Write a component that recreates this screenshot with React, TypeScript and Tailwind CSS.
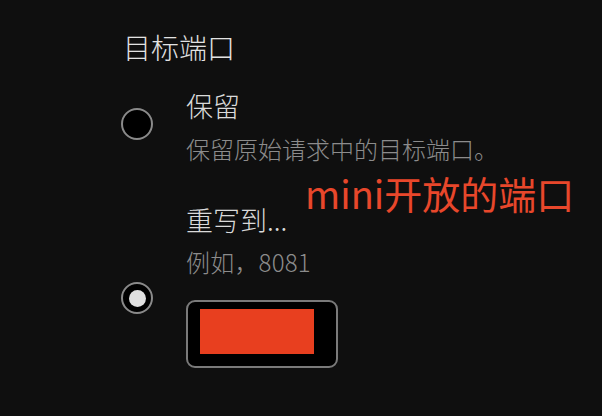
import React from 'react';

const font = { fontFamily: '"Noto Sans CJK SC", "Noto Sans", sans-serif' };

function Radio({ checked }: { checked?: boolean }) {
  return (
    <div className="w-[32px] h-[32px] rounded-full border-2 border-[#8a8a8a] bg-black flex items-center justify-center shrink-0">
      {checked && <div className="w-[17px] h-[17px] rounded-full bg-[#e0e0e0]" />}
    </div>
  );
}

export default function App() {
  return (
    <div className="relative w-[602px] h-[416px] bg-[#0f0f0f] text-[#dcdcdc] overflow-hidden" style={font}>
      <div className="pl-[121px] pt-[31px]">
        <h2 className="pl-[2px] text-[28px] leading-[32px] font-light text-[#e2e2e2]">目标端口</h2>

        {/* 保留 */}
        <div className="flex mt-[27px]">
          <div className="pt-[18px]">
            <Radio />
          </div>
          <div className="ml-[33px]">
            <p className="text-[27px] leading-[32px] font-light text-[#dadada]">保留</p>
            <p className="mt-[12px] text-[24px] leading-[30px] font-light text-[#8c8c8c]">保留原始请求中的目标端口。</p>
          </div>
        </div>

        {/* 重写到 */}
        <div className="flex mt-[40px]">
          <div className="pt-[78px]">
            <Radio checked />
          </div>
          <div className="ml-[33px]">
            <p className="text-[27px] leading-[32px] font-light text-[#dadada]">重写到...</p>
            <p className="mt-[11px] text-[24px] leading-[30px] font-light text-[#8c8c8c] tracking-[0.2px]">例如，8081</p>
            <div className="mt-[23px] w-[152px] h-[68px] rounded-[9px] border-2 border-[#7a7a7a] bg-black pl-[12px] pt-[7px]">
              <div className="w-[114px] h-[45px] bg-[#e83f1f]" />
            </div>
          </div>
        </div>
      </div>

      <div className="absolute left-[305px] top-[171px] text-[38px] leading-[44px] text-[#e8472b]">mini开放的端口</div>
    </div>
  );
}
